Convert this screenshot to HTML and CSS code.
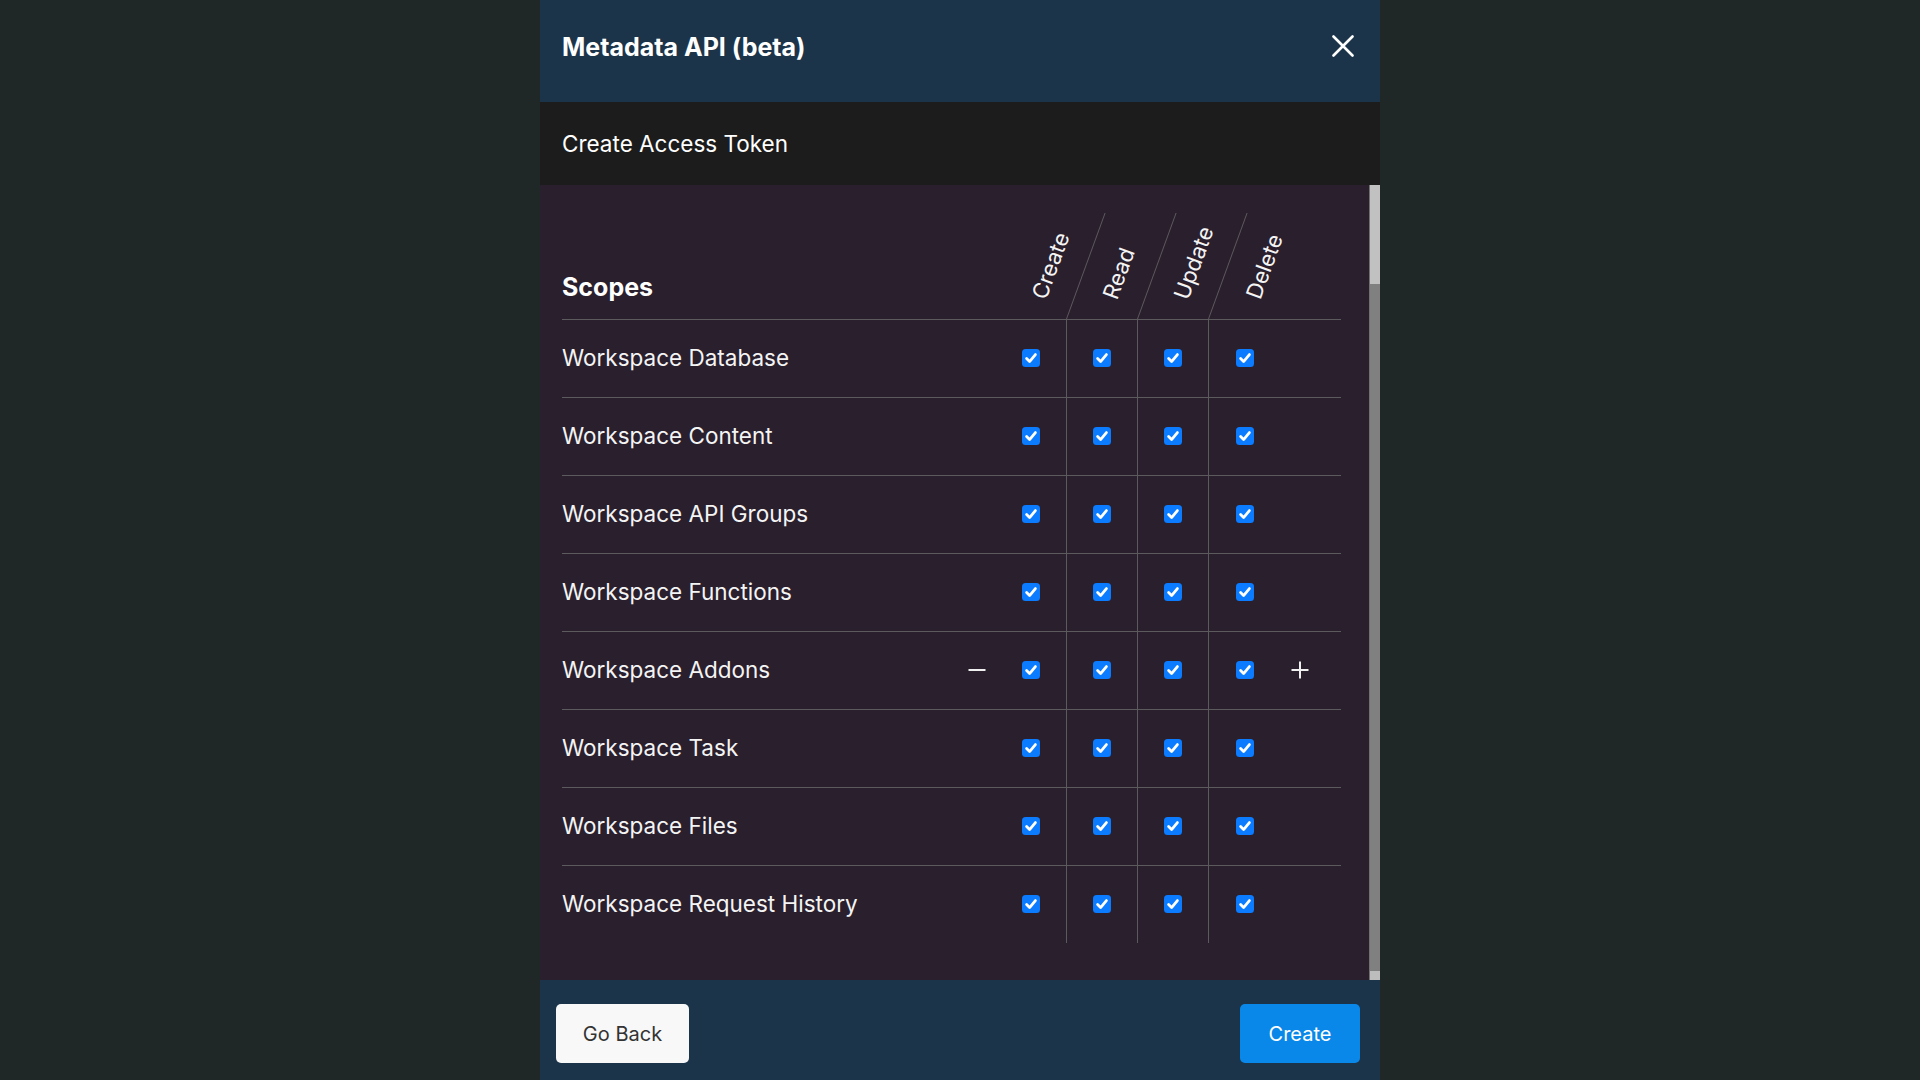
FILE: index.html
```html
<!DOCTYPE html>
<html lang="en">
<head>
<meta charset="utf-8">
<title>Metadata API (beta)</title>
<link rel="stylesheet" href="styles.css">
</head>
<body>
<div class="modal">
  <header class="modal-header">
    <h1 class="modal-title">Metadata API (beta)</h1>
    <button class="close-btn" aria-label="Close">
      <svg width="22" height="22" viewBox="0 0 22 22"><path d="M1.5 1.5 L20.5 20.5 M20.5 1.5 L1.5 20.5" stroke="#fff" stroke-width="2.6" stroke-linecap="round" fill="none"/></svg>
    </button>
  </header>
  <div class="modal-subheader">Create Access Token</div>
  <div class="modal-body">
    <div class="scroll-content">
      <div class="table">
        <div class="row head">
          <div class="cell label scopes">Scopes</div>
          <div class="th"><div class="th-skew bordered"><span class="th-text">Create</span></div></div>
          <div class="th"><div class="th-skew bordered"><span class="th-text">Read</span></div></div>
          <div class="th"><div class="th-skew bordered"><span class="th-text">Update</span></div></div>
          <div class="th"><div class="th-skew"><span class="th-text">Delete</span></div></div>
          <div class="cell"></div>
        </div>

        <div class="row">
          <div class="cell label">Workspace Database</div>
          <div class="cell check bordered"><span class="cb"><svg viewBox="0 0 18 18"><path d="M4.6 9.6 L7.6 12.6 L13.4 5.6"/></svg></span></div>
          <div class="cell check bordered"><span class="cb"><svg viewBox="0 0 18 18"><path d="M4.6 9.6 L7.6 12.6 L13.4 5.6"/></svg></span></div>
          <div class="cell check bordered"><span class="cb"><svg viewBox="0 0 18 18"><path d="M4.6 9.6 L7.6 12.6 L13.4 5.6"/></svg></span></div>
          <div class="cell check"><span class="cb"><svg viewBox="0 0 18 18"><path d="M4.6 9.6 L7.6 12.6 L13.4 5.6"/></svg></span></div>
          <div class="cell"></div>
        </div>

        <div class="row">
          <div class="cell label">Workspace Content</div>
          <div class="cell check bordered"><span class="cb"><svg viewBox="0 0 18 18"><path d="M4.6 9.6 L7.6 12.6 L13.4 5.6"/></svg></span></div>
          <div class="cell check bordered"><span class="cb"><svg viewBox="0 0 18 18"><path d="M4.6 9.6 L7.6 12.6 L13.4 5.6"/></svg></span></div>
          <div class="cell check bordered"><span class="cb"><svg viewBox="0 0 18 18"><path d="M4.6 9.6 L7.6 12.6 L13.4 5.6"/></svg></span></div>
          <div class="cell check"><span class="cb"><svg viewBox="0 0 18 18"><path d="M4.6 9.6 L7.6 12.6 L13.4 5.6"/></svg></span></div>
          <div class="cell"></div>
        </div>

        <div class="row">
          <div class="cell label">Workspace API Groups</div>
          <div class="cell check bordered"><span class="cb"><svg viewBox="0 0 18 18"><path d="M4.6 9.6 L7.6 12.6 L13.4 5.6"/></svg></span></div>
          <div class="cell check bordered"><span class="cb"><svg viewBox="0 0 18 18"><path d="M4.6 9.6 L7.6 12.6 L13.4 5.6"/></svg></span></div>
          <div class="cell check bordered"><span class="cb"><svg viewBox="0 0 18 18"><path d="M4.6 9.6 L7.6 12.6 L13.4 5.6"/></svg></span></div>
          <div class="cell check"><span class="cb"><svg viewBox="0 0 18 18"><path d="M4.6 9.6 L7.6 12.6 L13.4 5.6"/></svg></span></div>
          <div class="cell"></div>
        </div>

        <div class="row">
          <div class="cell label">Workspace Functions</div>
          <div class="cell check bordered"><span class="cb"><svg viewBox="0 0 18 18"><path d="M4.6 9.6 L7.6 12.6 L13.4 5.6"/></svg></span></div>
          <div class="cell check bordered"><span class="cb"><svg viewBox="0 0 18 18"><path d="M4.6 9.6 L7.6 12.6 L13.4 5.6"/></svg></span></div>
          <div class="cell check bordered"><span class="cb"><svg viewBox="0 0 18 18"><path d="M4.6 9.6 L7.6 12.6 L13.4 5.6"/></svg></span></div>
          <div class="cell check"><span class="cb"><svg viewBox="0 0 18 18"><path d="M4.6 9.6 L7.6 12.6 L13.4 5.6"/></svg></span></div>
          <div class="cell"></div>
        </div>

        <div class="row">
          <div class="cell label">
            <span class="label-text">Workspace Addons</span>
            <span class="row-icon minus"><svg width="18" height="18" viewBox="0 0 18 18"><path d="M0.5 9 H17.5"/></svg></span>
          </div>
          <div class="cell check bordered"><span class="cb"><svg viewBox="0 0 18 18"><path d="M4.6 9.6 L7.6 12.6 L13.4 5.6"/></svg></span></div>
          <div class="cell check bordered"><span class="cb"><svg viewBox="0 0 18 18"><path d="M4.6 9.6 L7.6 12.6 L13.4 5.6"/></svg></span></div>
          <div class="cell check bordered"><span class="cb"><svg viewBox="0 0 18 18"><path d="M4.6 9.6 L7.6 12.6 L13.4 5.6"/></svg></span></div>
          <div class="cell check"><span class="cb"><svg viewBox="0 0 18 18"><path d="M4.6 9.6 L7.6 12.6 L13.4 5.6"/></svg></span></div>
          <div class="cell plus-cell"><span class="row-icon plus"><svg width="18" height="18" viewBox="0 0 18 18"><path d="M0.5 9 H17.5 M9 0.5 V17.5"/></svg></span></div>
        </div>

        <div class="row">
          <div class="cell label">Workspace Task</div>
          <div class="cell check bordered"><span class="cb"><svg viewBox="0 0 18 18"><path d="M4.6 9.6 L7.6 12.6 L13.4 5.6"/></svg></span></div>
          <div class="cell check bordered"><span class="cb"><svg viewBox="0 0 18 18"><path d="M4.6 9.6 L7.6 12.6 L13.4 5.6"/></svg></span></div>
          <div class="cell check bordered"><span class="cb"><svg viewBox="0 0 18 18"><path d="M4.6 9.6 L7.6 12.6 L13.4 5.6"/></svg></span></div>
          <div class="cell check"><span class="cb"><svg viewBox="0 0 18 18"><path d="M4.6 9.6 L7.6 12.6 L13.4 5.6"/></svg></span></div>
          <div class="cell"></div>
        </div>

        <div class="row">
          <div class="cell label">Workspace Files</div>
          <div class="cell check bordered"><span class="cb"><svg viewBox="0 0 18 18"><path d="M4.6 9.6 L7.6 12.6 L13.4 5.6"/></svg></span></div>
          <div class="cell check bordered"><span class="cb"><svg viewBox="0 0 18 18"><path d="M4.6 9.6 L7.6 12.6 L13.4 5.6"/></svg></span></div>
          <div class="cell check bordered"><span class="cb"><svg viewBox="0 0 18 18"><path d="M4.6 9.6 L7.6 12.6 L13.4 5.6"/></svg></span></div>
          <div class="cell check"><span class="cb"><svg viewBox="0 0 18 18"><path d="M4.6 9.6 L7.6 12.6 L13.4 5.6"/></svg></span></div>
          <div class="cell"></div>
        </div>

        <div class="row last">
          <div class="cell label">Workspace Request History</div>
          <div class="cell check bordered"><span class="cb"><svg viewBox="0 0 18 18"><path d="M4.6 9.6 L7.6 12.6 L13.4 5.6"/></svg></span></div>
          <div class="cell check bordered"><span class="cb"><svg viewBox="0 0 18 18"><path d="M4.6 9.6 L7.6 12.6 L13.4 5.6"/></svg></span></div>
          <div class="cell check bordered"><span class="cb"><svg viewBox="0 0 18 18"><path d="M4.6 9.6 L7.6 12.6 L13.4 5.6"/></svg></span></div>
          <div class="cell check"><span class="cb"><svg viewBox="0 0 18 18"><path d="M4.6 9.6 L7.6 12.6 L13.4 5.6"/></svg></span></div>
          <div class="cell"></div>
        </div>
      </div>
    </div>
    <div class="scrollbar">
      <div class="scroll-thumb"></div>
      <div class="scroll-track"></div>
      <div class="scroll-end"></div>
    </div>
  </div>
  <footer class="modal-footer">
    <button class="btn btn-secondary">Go Back</button>
    <button class="btn btn-primary">Create</button>
  </footer>
</div>
</body>
</html>
```
FILE: styles.css
```css
* { box-sizing: border-box; }

html, body {
  margin: 0;
  height: 1080px;
  overflow: hidden;
}

body {
  background: #1f2727;
  font-family: Inter, "Noto Sans", "Liberation Sans", sans-serif;
  color: #ffffff;
  display: flex;
  justify-content: center;
}

.modal {
  width: 840px;
  display: flex;
  flex-direction: column;
  flex-shrink: 0;
}

.modal-header {
  height: 102px;
  flex-shrink: 0;
  background: #1b3449;
  display: flex;
  align-items: flex-start;
  justify-content: space-between;
  padding: 23px 26px 0 22px;
}

.modal-title {
  margin: 0;
  font-size: 25px;
  font-weight: 700;
  line-height: 48px;
  letter-spacing: 0;
}

.close-btn {
  background: none;
  border: none;
  padding: 0;
  margin-top: 12px;
  width: 22px;
  height: 22px;
  display: flex;
  cursor: pointer;
}

.modal-subheader {
  height: 83px;
  flex-shrink: 0;
  background: #1c1c1c;
  display: flex;
  align-items: center;
  padding: 0 22px;
  font-size: 22.5px;
  font-weight: 400;
}

.modal-body {
  height: 795px;
  flex-shrink: 0;
  background: #2a1f2d;
  display: flex;
  overflow: hidden;
}

.scroll-content {
  flex: 1;
  padding: 28px 28px 38px 22px;
  overflow: hidden;
}

.table {
  display: flex;
  flex-direction: column;
}

.row {
  display: grid;
  grid-template-columns: 1fr 71px 71px 71px 71px 61px;
  height: 78px;
  border-bottom: 1px solid #5d5a5e;
}

.row.last {
  border-bottom: none;
  height: 77px;
}

.row.head {
  height: 107px;
}

.cell {
  display: flex;
  align-items: center;
  min-width: 0;
}

.cell.bordered {
  border-right: 1px solid #5d5a5e;
}

.label {
  font-size: 22.5px;
  color: #f4f4f4;
  justify-content: space-between;
  padding-bottom: 2px;
}

.label.scopes {
  font-size: 25px;
  font-weight: 700;
  align-items: flex-end;
  padding-bottom: 17px;
  color: #ffffff;
}

.check {
  justify-content: center;
  padding-bottom: 2px;
}

.cb {
  width: 18px;
  height: 18px;
  border-radius: 3.5px;
  background: #0b7bff;
  display: block;
}

.cb svg {
  width: 18px;
  height: 18px;
  display: block;
}

.cb path {
  fill: none;
  stroke: #ffffff;
  stroke-width: 2.8;
  stroke-linecap: round;
  stroke-linejoin: round;
}

.th {
  height: 106px;
}

.th-skew {
  height: 106px;
  transform: skewX(-20deg);
  transform-origin: bottom left;
  display: flex;
  justify-content: center;
  align-items: flex-end;
  padding-bottom: 19px;
}

.th-skew.bordered {
  border-right: 1px solid #5d5a5e;
}

.th-text {
  writing-mode: vertical-rl;
  transform: skewX(20deg) rotate(200deg);
  font-size: 22px;
  line-height: 24px;
  color: #f4f4f4;
  white-space: nowrap;
}

.row-icon {
  display: flex;
  width: 18px;
  height: 18px;
}

.row-icon path {
  stroke: #f0f0f0;
  stroke-width: 2;
  fill: none;
}

.minus {
  margin-right: 10px;
}

.plus-cell {
  padding-left: 11px;
  padding-bottom: 2px;
}

.scrollbar {
  width: 11px;
  flex-shrink: 0;
  display: flex;
  flex-direction: column;
  background: #808080;
  border-left: 1px solid #707070;
}

.scroll-thumb {
  height: 99px;
  background: #c1c1c1;
}

.scroll-track {
  flex: 1;
}

.scroll-end {
  height: 9px;
  background: #bdbdbd;
}

.modal-footer {
  flex-shrink: 0;
  background: #1b3449;
  display: flex;
  justify-content: space-between;
  align-items: center;
  padding: 24px 20px 24px 16px;
}

.btn {
  height: 59px;
  border: none;
  border-radius: 5px;
  font-family: Inter, "Noto Sans", "Liberation Sans", sans-serif;
  font-size: 20px;
  cursor: pointer;
}

.btn-secondary {
  width: 133px;
  background: #f8f8f8;
  color: #333333;
}

.btn-primary {
  width: 120px;
  background: #0a88e9;
  color: #ffffff;
}
```
